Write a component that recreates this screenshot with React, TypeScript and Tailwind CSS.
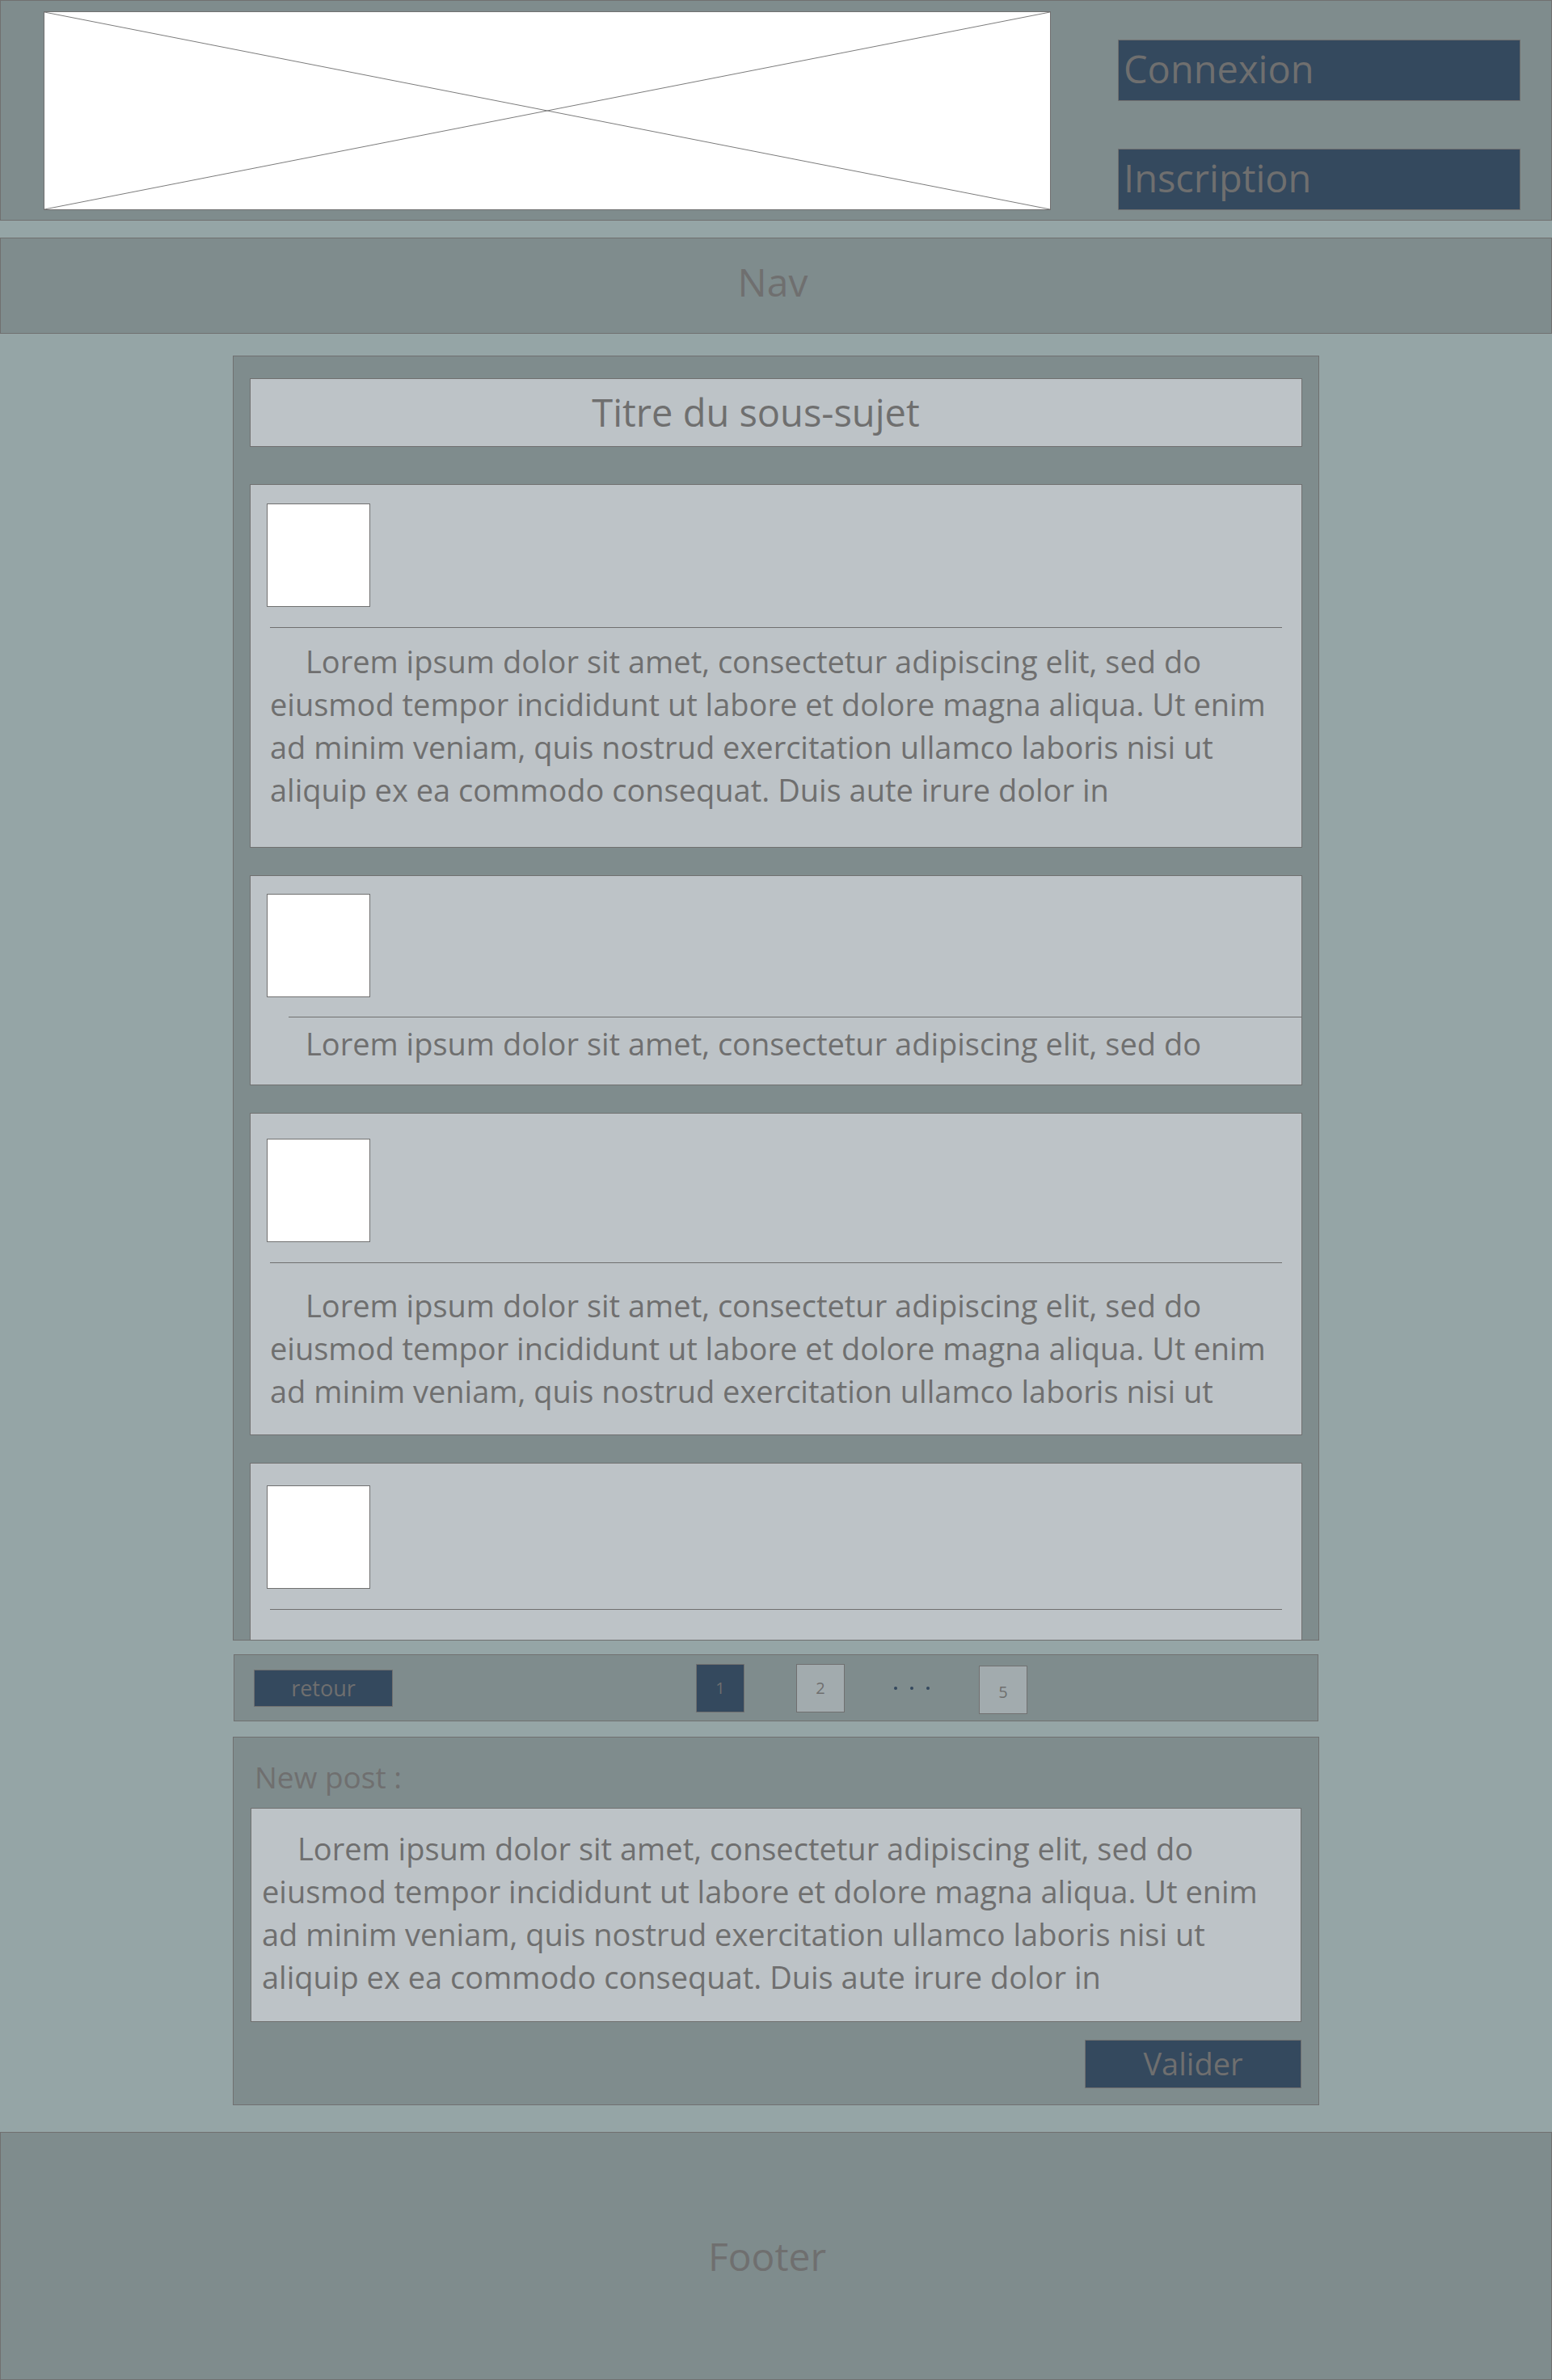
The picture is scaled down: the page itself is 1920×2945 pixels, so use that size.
import React from 'react';

// ─── Data ─────────────────────────────────────────────────────────────────────

const LINES = [
    'Lorem ipsum dolor sit amet, consectetur adipiscing elit, sed do',
    'eiusmod tempor incididunt ut labore et dolore magna aliqua. Ut enim',
    'ad minim veniam, quis nostrud exercitation ullamco laboris nisi ut',
    'aliquip ex ea commodo consequat. Duis aute irure dolor in',
];

// ─── Pieces ───────────────────────────────────────────────────────────────────

function Lines({ count }: { count: number }) {
    return (
        <div className="whitespace-nowrap text-[38px] leading-[53px]">
            {LINES.slice(0, count).map((line, i) => (
                <div key={i} className={i === 0 ? 'pl-[44px]' : ''}>
                    {line}
                </div>
            ))}
        </div>
    );
}

function Avatar() {
    return <div className="h-[128px] w-[128px] shrink-0 border border-[#707070] bg-white" />;
}

function Post({
    height,
    top,
    lines,
    wide = false,
    textGap,
}: {
    height: string;
    top: string;
    lines: number;
    wide?: boolean;
    textGap: string;
}) {
    return (
        <div className={`mt-[34px] shrink-0 border border-[#707070] bg-[#bdc3c7] pl-[20px] pr-[20px] ${height} ${top}`}>
            <Avatar />
            {wide ? (
                <div className="ml-[27px] -mr-[20px] mt-[24px] h-px bg-[#707070]" />
            ) : (
                <div className="mx-[4px] mt-[25px] h-px bg-[#707070]" />
            )}
            <div className={`ml-[4px] ${textGap}`}>
                <Lines count={lines} />
            </div>
        </div>
    );
}

// ─── Page ─────────────────────────────────────────────────────────────────────

export default function App() {
    return (
        <div className="min-h-[2945px] w-full bg-[#95a5a6] font-['Open_Sans',sans-serif] text-[#6f6f6f]">
            {/* Header */}
            <header className="flex h-[273px] border border-[#707070] bg-[#7f8c8d] pl-[53px] pt-[13px]">
                <div className="relative h-[246px] w-[1246px] border border-[#707070] bg-white">
                    <svg className="absolute inset-0 h-full w-full" viewBox="0 0 100 100" preserveAspectRatio="none">
                        <line x1="0" y1="0" x2="100" y2="100" stroke="#7c7c7c" strokeWidth="1" vectorEffect="non-scaling-stroke" />
                        <line x1="100" y1="0" x2="0" y2="100" stroke="#7c7c7c" strokeWidth="1" vectorEffect="non-scaling-stroke" />
                    </svg>
                </div>
                <div className="ml-[83px] flex flex-col pt-[35px]">
                    <button className="flex h-[76px] w-[498px] items-center border border-[#707070] bg-[#34495e] pb-[4px] pl-[6px] text-[47px] text-[#6f6f6f]">
                        Connexion
                    </button>
                    <button className="mt-[59px] flex h-[76px] w-[498px] items-center border border-[#707070] bg-[#34495e] pb-[4px] pl-[6px] text-[47px] text-[#6f6f6f]">
                        Inscription
                    </button>
                </div>
            </header>

            {/* Nav */}
            <nav className="mt-[21px] flex h-[119px] items-center justify-center border border-[#707070] bg-[#7f8c8d] pb-[9px] pr-[8px] text-[48px] leading-none">
                Nav
            </nav>

            {/* Thread */}
            <main className="mx-auto mt-[27px] flex h-[1590px] w-[1344px] flex-col overflow-hidden border border-[#707070] bg-[#7f8c8d] px-[20px] pt-[27px]">
                <div className="flex h-[85px] shrink-0 items-center justify-center border border-[#707070] bg-[#bdc3c7] pr-[50px] text-[47px] leading-none">
                    Titre du sous-sujet
                </div>

                <div className="mt-[12px]" />
                <Post height="h-[450px]" top="pt-[23px]" lines={4} textGap="mt-[15px]" />
                <Post height="h-[260px]" top="pt-[22px]" lines={1} wide textGap="mt-[6px]" />
                <Post height="h-[399px]" top="pt-[31px]" lines={3} textGap="mt-[26px]" />
                <Post height="h-[400px]" top="pt-[27px]" lines={0} textGap="" />
            </main>

            {/* Pagination */}
            <div className="mx-auto mt-[17px] flex h-[83px] w-[1342px] items-center border border-[#707070] bg-[#7f8c8d] pl-[24px]">
                <button className="h-[46px] w-[172px] border border-[#707070] bg-[#34495e] text-[27px] leading-none text-[#6f6f6f]">
                    retour
                </button>
                <div className="ml-[375px] flex h-[60px] w-[60px] items-center justify-center border border-[#707070] bg-[#34495e] text-[20px]">
                    1
                </div>
                <div className="ml-[64px] flex h-[60px] w-[60px] items-center justify-center border border-[#707070] bg-[#a2abae] text-[20px]">
                    2
                </div>
                <div className="ml-[61px] flex items-center gap-[16px]">
                    <span className="h-[4px] w-[4px] rounded-full bg-[#34495e]" />
                    <span className="h-[4px] w-[4px] rounded-full bg-[#34495e]" />
                    <span className="h-[4px] w-[4px] rounded-full bg-[#34495e]" />
                </div>
                <div className="ml-[61px] mt-[5px] flex h-[60px] w-[60px] items-center justify-center border border-[#707070] bg-[#a2abae] pt-[6px] text-[20px]">
                    5
                </div>
            </div>

            {/* New post */}
            <section className="mx-auto mt-[19px] flex h-[456px] w-[1344px] flex-col border border-[#707070] bg-[#7f8c8d] pl-[21px] pr-[21px] pt-[31px]">
                <div className="ml-[5px] h-[35px] text-[37px] leading-[35px]">New post :</div>
                <div className="mt-[21px] h-[265px] border border-[#707070] bg-[#bdc3c7] pl-[13px] pt-[23px]">
                    <Lines count={4} />
                </div>
                <div className="mt-[22px] flex justify-end">
                    <button className="flex h-[60px] w-[268px] items-center justify-center border border-[#707070] bg-[#34495e] pb-[2px] text-[38px] leading-none text-[#6f6f6f]">
                        Valider
                    </button>
                </div>
            </section>

            {/* Footer */}
            <footer className="mt-[33px] flex h-[307px] items-center justify-center border border-[#707070] bg-[#7f8c8d] pr-[22px] text-[48px] leading-none">
                Footer
            </footer>
        </div>
    );
}
